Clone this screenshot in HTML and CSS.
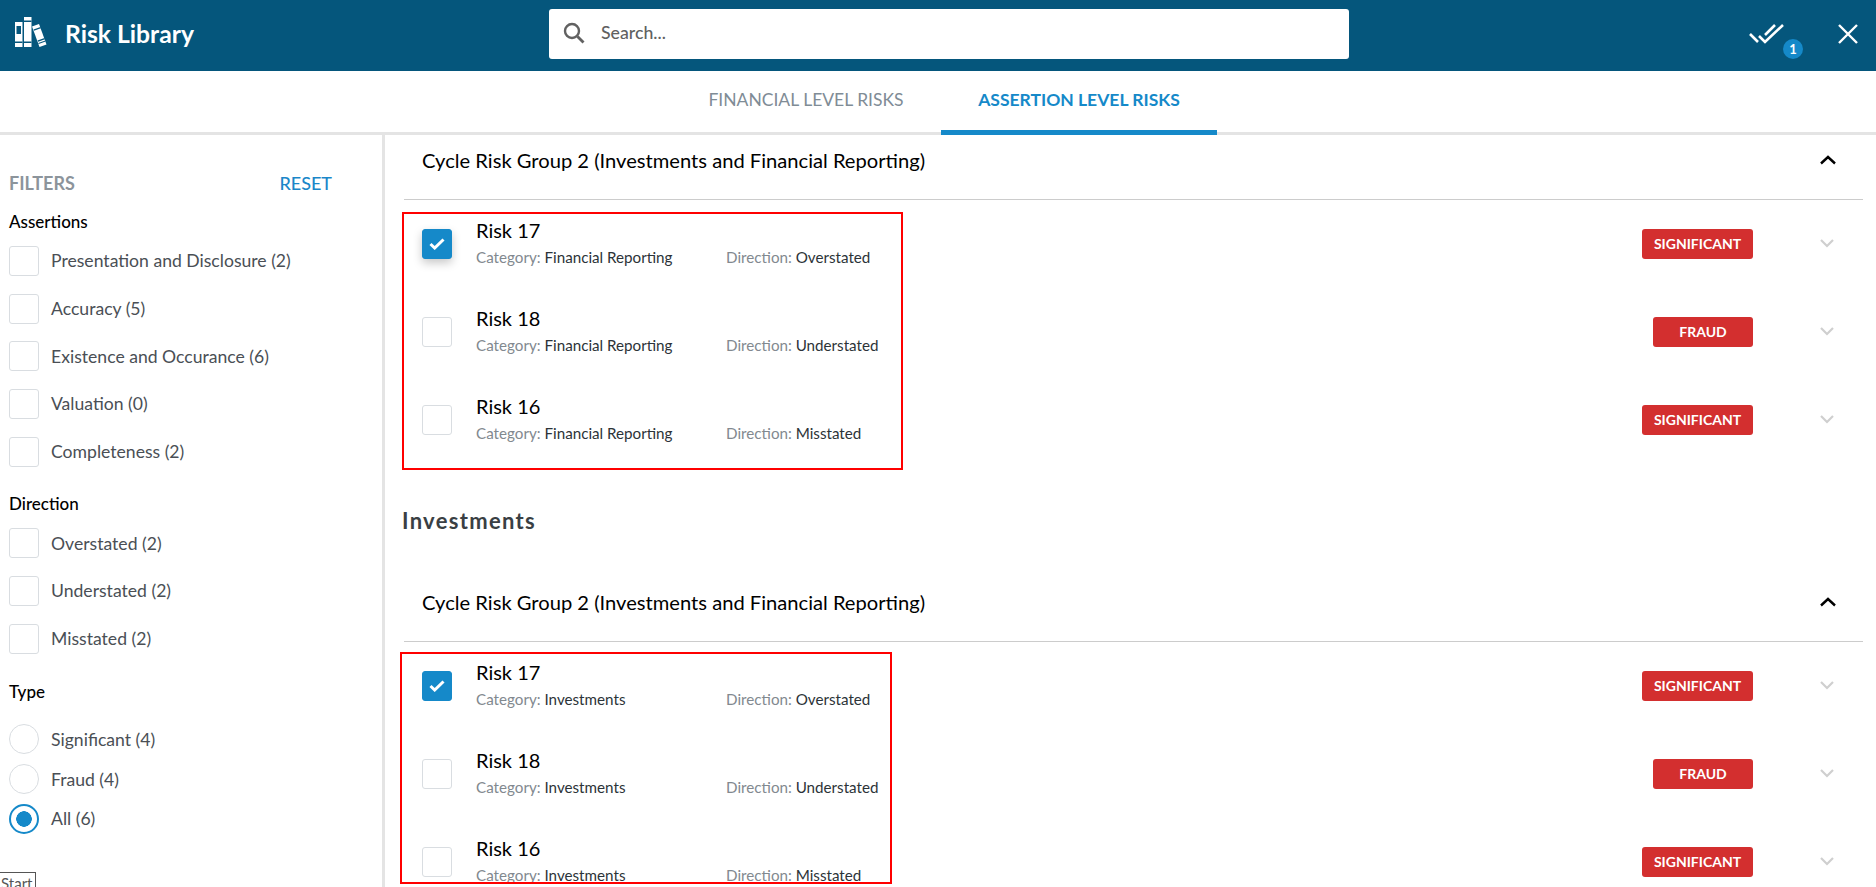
FILE: index.html
```html
<!DOCTYPE html>
<html lang="en">
<head>
<meta charset="utf-8">
<title>Risk Library</title>
<link rel="stylesheet" href="styles.css">
</head>
<body>
<header class="topbar">
  <div class="brand">
    <svg class="brand-icon" width="40" height="40" viewBox="0 0 40 40"><g fill="#fff"><path d="M5 10h7.500v25H5z"/><path d="M14 5h7.500v30H14z"/><path d="M22 14.500l7-2.500 7.500 20.500-7 2.500z"/></g><g fill="#05567c"><path d="M6.500 14h4.500v8H6.500zM5 29.500h7.500V31H5zM14 8.500h7.500V10H14zM14 29.500h7.500V31H14zM23.500 17.500l7-2.500.4 1.300-7 2.500zM27.500 28.500l7-2.500.5 1.300-7 2.500zM28.300 31l7-2.500.3 1-7 2.500z"/></g></svg>
    <span class="brand-name">Risk Library</span>
  </div>
  <div class="search">
    <svg class="search-icon" width="24" height="24" viewBox="0 0 24 24"><circle cx="10" cy="10" r="7" fill="none" stroke="#616161" stroke-width="2.400"/><path d="M15.500 15.500l6 6" stroke="#616161" stroke-width="2.800" fill="none"/></svg>
    <span class="search-text">Search...</span>
  </div>
  <div class="actions">
    <div class="done">
      <svg width="38" height="24" viewBox="0 0 38 24"><path d="M2 12l8 8M11 14l6 6L35 3M17 13L27 3" stroke="#fff" stroke-width="2.600" fill="none"/></svg>
      <span class="count">1</span>
    </div>
    <svg class="close" width="20" height="20" viewBox="0 0 20 20"><path d="M1 1l18 18M19 1L1 19" stroke="#fff" stroke-width="2.400" fill="none"/></svg>
  </div>
</header>

<nav class="tabs">
  <a class="tab">FINANCIAL LEVEL RISKS</a>
  <a class="tab tab-active">ASSERTION LEVEL RISKS</a>
</nav>

<div class="layout">
  <aside class="filters">
    <div class="filters-head"><span class="filters-title">FILTERS</span><span class="reset">RESET</span></div>
    <h3 class="fgroup first">Assertions</h3>
    <ul class="opts">
      <li class="opt"><span class="box"></span>Presentation and Disclosure (2)</li>
      <li class="opt"><span class="box"></span>Accuracy (5)</li>
      <li class="opt"><span class="box"></span>Existence and Occurance (6)</li>
      <li class="opt"><span class="box"></span>Valuation (0)</li>
      <li class="opt"><span class="box"></span>Completeness (2)</li>
    </ul>
    <h3 class="fgroup">Direction</h3>
    <ul class="opts">
      <li class="opt"><span class="box"></span>Overstated (2)</li>
      <li class="opt"><span class="box"></span>Understated (2)</li>
      <li class="opt"><span class="box"></span>Misstated (2)</li>
    </ul>
    <h3 class="fgroup">Type</h3>
    <ul class="radios">
      <li class="opt radio-opt"><span class="radio"></span>Significant (4)</li>
      <li class="opt radio-opt"><span class="radio"></span>Fraud (4)</li>
      <li class="opt radio-opt"><span class="radio radio-on"></span>All (6)</li>
    </ul>
    <span class="start">Start</span>
  </aside>

  <main class="content">
    <section class="group">
      <div class="group-head">
        <span>Cycle Risk Group 2 (Investments and Financial Reporting)</span>
        <svg class="chev-up" width="16" height="10" viewBox="0 0 16 10"><path d="M1 8.500L8 2l7 6.500" stroke="#000" stroke-width="2.400" fill="none"/></svg>
      </div>
      <div class="rows">
        <div class="mark mark-a"></div>
        <div class="row">
          <span class="box box-on shadow"><svg width="16" height="12" viewBox="0 0 16 12"><path d="M1.500 6l4.200 4 8.800-8.500" stroke="#fff" stroke-width="3" fill="none"/></svg></span>
          <div class="info">
            <div class="risk">Risk 17</div>
            <div class="meta"><span class="meta-cat"><i>Category:</i> Financial Reporting</span><span><i>Direction:</i> Overstated</span></div>
          </div>
          <span class="badge">SIGNIFICANT</span>
          <svg class="chev" width="16" height="10" viewBox="0 0 16 10"><path d="M2 2l6 6 6-6" stroke="#cfcfcf" stroke-width="2.200" fill="none"/></svg>
        </div>
        <div class="row">
          <span class="box"></span>
          <div class="info">
            <div class="risk">Risk 18</div>
            <div class="meta"><span class="meta-cat"><i>Category:</i> Financial Reporting</span><span><i>Direction:</i> Understated</span></div>
          </div>
          <span class="badge badge-fraud">FRAUD</span>
          <svg class="chev" width="16" height="10" viewBox="0 0 16 10"><path d="M2 2l6 6 6-6" stroke="#cfcfcf" stroke-width="2.200" fill="none"/></svg>
        </div>
        <div class="row">
          <span class="box"></span>
          <div class="info">
            <div class="risk">Risk 16</div>
            <div class="meta"><span class="meta-cat"><i>Category:</i> Financial Reporting</span><span><i>Direction:</i> Misstated</span></div>
          </div>
          <span class="badge">SIGNIFICANT</span>
          <svg class="chev" width="16" height="10" viewBox="0 0 16 10"><path d="M2 2l6 6 6-6" stroke="#cfcfcf" stroke-width="2.200" fill="none"/></svg>
        </div>
      </div>
    </section>

    <h2 class="section-title">Investments</h2>

    <section class="group">
      <div class="group-head">
        <span>Cycle Risk Group 2 (Investments and Financial Reporting)</span>
        <svg class="chev-up" width="16" height="10" viewBox="0 0 16 10"><path d="M1 8.500L8 2l7 6.500" stroke="#000" stroke-width="2.400" fill="none"/></svg>
      </div>
      <div class="rows">
        <div class="mark mark-b"></div>
        <div class="row">
          <span class="box box-on"><svg width="16" height="12" viewBox="0 0 16 12"><path d="M1.500 6l4.200 4 8.800-8.500" stroke="#fff" stroke-width="3" fill="none"/></svg></span>
          <div class="info">
            <div class="risk">Risk 17</div>
            <div class="meta"><span class="meta-cat"><i>Category:</i> Investments</span><span><i>Direction:</i> Overstated</span></div>
          </div>
          <span class="badge">SIGNIFICANT</span>
          <svg class="chev" width="16" height="10" viewBox="0 0 16 10"><path d="M2 2l6 6 6-6" stroke="#cfcfcf" stroke-width="2.200" fill="none"/></svg>
        </div>
        <div class="row">
          <span class="box"></span>
          <div class="info">
            <div class="risk">Risk 18</div>
            <div class="meta"><span class="meta-cat"><i>Category:</i> Investments</span><span><i>Direction:</i> Understated</span></div>
          </div>
          <span class="badge badge-fraud">FRAUD</span>
          <svg class="chev" width="16" height="10" viewBox="0 0 16 10"><path d="M2 2l6 6 6-6" stroke="#cfcfcf" stroke-width="2.200" fill="none"/></svg>
        </div>
        <div class="row">
          <span class="box"></span>
          <div class="info">
            <div class="risk">Risk 16</div>
            <div class="meta"><span class="meta-cat"><i>Category:</i> Investments</span><span><i>Direction:</i> Misstated</span></div>
          </div>
          <span class="badge">SIGNIFICANT</span>
          <svg class="chev" width="16" height="10" viewBox="0 0 16 10"><path d="M2 2l6 6 6-6" stroke="#cfcfcf" stroke-width="2.200" fill="none"/></svg>
        </div>
      </div>
    </section>
  </main>
</div>
</body>
</html>
```
FILE: styles.css
```css
* { box-sizing: border-box; }
html, body { margin: 0; height: 887px; overflow: hidden; }
body { font-family: Lato, sans-serif; background: #fff; color: #333; }
ul { list-style: none; margin: 0; padding: 0; }
h2, h3 { margin: 0; }

.topbar { height: 71px; background: #05567c; display: flex; align-items: center; padding-left: 10px; }
.brand { display: flex; align-items: center; width: 539px; }
.brand-icon { margin-right: 15px; margin-top: -7px; }
.brand-name { color: #fff; font-size: 24.700px; font-weight: 700; line-height: 32px; margin-top: -3px; }
.search { width: 800px; height: 50px; margin-top: -3px; background: #fff; border-radius: 3px; display: flex; align-items: center; padding-left: 13px; }
.search-icon { margin-right: 15px; margin-top: -2px; }
.search-text { font-size: 17.700px; font-weight: 500; color: #616161; margin-top: -4px; }
.actions { margin-left: auto; display: flex; align-items: center; padding-right: 18px; }
.done { position: relative; width: 38px; height: 24px; margin-right: 52px; margin-top: -3px; }
.done svg { display: block; }
.count { position: absolute; left: 35px; top: 17px; width: 20px; height: 20px; border-radius: 50%; background: #1589c9; color: #fff; font-size: 13px; font-weight: 700; line-height: 20px; text-align: center; }
.close { margin-top: -3px; }

.tabs { height: 64px; border-bottom: 3px solid #e4e4e4; display: flex; padding-left: 671px; }
.tab { width: 270px; height: 64px; text-align: center; font-size: 17.500px; line-height: 58px; color: #7f8c96; }
.tab-active { width: 276px; color: #1589c9; font-weight: 700; border-bottom: 5px solid #1589c9; }

.layout { display: flex; height: 752px; }
.filters { width: 385px; flex: none; border-right: 3px solid #e4e4e4; padding: 36px 0 0 9px; overflow: hidden; position: relative; }
.filters-head { display: flex; justify-content: space-between; padding-right: 50px; line-height: 24px; font-size: 18px; font-weight: 500; }
.filters-title { color: #8c949b; font-weight: 700; }
.reset { color: #1b87c9; }
.fgroup { font-size: 17px; font-weight: 500; color: #000; line-height: 24px; margin: 17px 0 3px; }
.fgroup.first { margin-top: 15px; margin-bottom: 3px; }
.opt { display: flex; align-items: center; height: 47.700px; font-size: 17.600px; color: #4a4f55; }
.opts { margin-bottom: 10px; }
.box { width: 30px; height: 30px; border: 1px solid #d9dde1; border-radius: 3px; background: #fff; flex: none; display: flex; align-items: center; justify-content: center; }
.opt .box { margin-right: 12px; }
.box-on { background: #1589c9; border-color: #1589c9; }
.shadow { box-shadow: 0 4px 10px rgba(0, 0, 0, .22); }
.radios { margin-top: 16px; }
.radio-opt { height: 39.800px; }
.radio { width: 30px; height: 30px; border-radius: 50%; border: 1px solid #d9dde1; margin-right: 12px; flex: none; }
.radio-on { border: 2px solid #1589c9; background: radial-gradient(circle, #1589c9 0 7.500px, #fff 8px); }
.start { position: absolute; left: -4px; top: 737px; width: 40px; height: 24px; border: 1px solid #555; font-size: 15px; line-height: 20px; padding: 0 0 0 4px; color: #555; white-space: nowrap; }

.content { flex: 1; padding: 0 13px 0 19px; overflow: hidden; }
.group-head { height: 65px; border-bottom: 1px solid #ccc; display: flex; align-items: center; justify-content: space-between; padding: 0 27px 15px 18px; font-size: 20.150px; color: #000; }
.rows { position: relative; padding-top: 12px; }
.row { height: 88px; display: flex; padding-left: 18px; padding-right: 28px; align-items: flex-start; }
.row > .box { margin-top: 17px; margin-right: 24px; }
.info { flex: 1; padding-top: 5px; }
.risk { font-size: 20px; line-height: 27px; color: #000; }
.meta { display: flex; font-size: 15.200px; line-height: 24px; color: #2c3338; margin-top: 1px; }
.meta i { font-style: normal; color: #82898f; }
.meta-cat { width: 250px; }
.badge { width: 111px; height: 30px; margin-top: 17px; margin-right: 66px; background: #d32f2f; border-radius: 3px; color: #fff; font-size: 14px; font-weight: 700; line-height: 30px; text-align: center; }
.badge-fraud { width: 100px; }
.chev { margin-top: 26px; }
.mark { position: absolute; border: 2px solid #f00; pointer-events: none; }
.mark-a { left: -2px; top: 12px; width: 501px; height: 258px; }
.mark-b { left: -4px; top: 10px; width: 492px; height: 232px; }
.section-title { font-size: 22px; font-weight: 700; color: #3a3f44; letter-spacing: 1.300px; line-height: 28px; margin: 31px 0 0 -2px; height: 70px; }
```
